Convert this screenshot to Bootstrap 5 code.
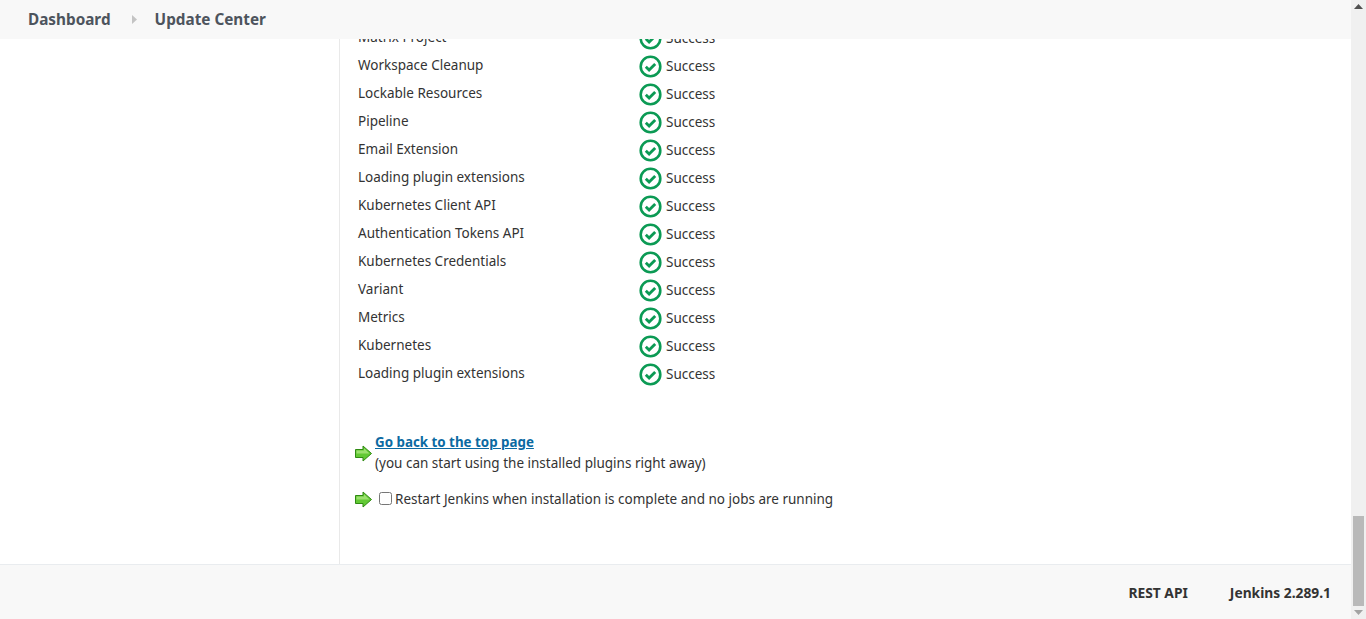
<!DOCTYPE html>
<html lang="en">
  <head>
    <meta charset="UTF-8" />
    <title>Update Center</title>
    <link href="https://cdn.jsdelivr.net/npm/bootstrap@5.3.3/dist/css/bootstrap.min.css" rel="stylesheet" />
    <style>
      html, body { height: 100%; overflow: hidden; }
      body { font-family: "Noto Sans", "Liberation Sans", sans-serif; font-size: 13.5px; color: #333; }
      .page-wrap { height: 619px; }
      .page-col { min-width: 0; }
      .top-bar { height: 39px; background: #f8f8f8; padding-left: 28px; color: #4d545d; font-size: 15.3px; font-weight: 700; z-index: 2; }
      .crumb-sep { width: 44px; padding-left: 21px; }
      .crumb-sep svg { display: block; }
      .main-area { min-height: 0; overflow: hidden; }
      .side-pane { width: 340px; border-right: 1px solid #e9e9e9; }
      .result-list { margin-top: -15px; padding-left: 18px; }
      .result-row { height: 28px; }
      .result-name { width: 281px; padding-bottom: 2px; }
      .status-ok { gap: 4px; }
      .next-block { margin-top: 44px; padding-left: 15px; line-height: 21px; }
      .back-text { margin-left: 3px; }
      .back-link { font-size: 13.35px; font-weight: 700; color: #0b6aa2; }
      .arrow-ico { width: 17px; height: 17px; flex: none; }
      .restart-row { margin-top: 15px; }
      .restart-row input { width: 13px; height: 13px; margin: 0 3px 2px 7px; }
      .foot-bar { height: 55px; background: #f8f8f8; border-top: 1px solid #e9ecef; padding: 2px 20px 0 0; gap: 42px; color: #333; font-size: 13.8px; font-weight: 700; }
      .fake-scroll { width: 15px; background: #f0f0f0; }
      .scroll-thumb { width: 11px; height: 90px; margin: 0 2px; background: #b9b9b9; }
      .scroll-cap { height: 13px; }
    </style>
  </head>
  <body>
    <div class="page-wrap d-flex">
      <div class="page-col flex-grow-1 d-flex flex-column">
        <div class="top-bar d-flex align-items-center flex-shrink-0">
          <span>Dashboard</span>
          <span class="crumb-sep"><svg width="5" height="9" viewBox="0 0 5 9"><path d="M0 0l5 4.500L0 9z" fill="#c4c4c4"/></svg></span>
          <span>Update Center</span>
        </div>
        <div class="main-area flex-grow-1 d-flex">
          <div class="side-pane flex-shrink-0"></div>
          <div class="flex-grow-1">
            <div class="result-list" id="results"></div>
            <div class="next-block">
              <div class="d-flex align-items-center">
                <svg class="arrow-ico" viewBox="0 0 17 17"><path d="M.5 4.500h7.500V1L16.500 8.500 8 16v-3.500H.5z" fill="#62c934" stroke="#2f8a12"/><path d="M1.500 5.500h7.500V3.200L14.500 8.500H1.500z" fill="#9be06f"/></svg>
                <div class="back-text">
                  <a href="#" class="back-link">Go back to the top page</a><br />
                  (you can start using the installed plugins right away)
                </div>
              </div>
              <div class="restart-row d-flex align-items-center">
                <svg class="arrow-ico" viewBox="0 0 17 17"><path d="M.5 4.500h7.500V1L16.500 8.500 8 16v-3.500H.5z" fill="#62c934" stroke="#2f8a12"/><path d="M1.500 5.500h7.500V3.200L14.500 8.500H1.500z" fill="#9be06f"/></svg>
                <input type="checkbox" id="restart" />
                <label for="restart">Restart Jenkins when installation is complete and no jobs are running</label>
              </div>
            </div>
          </div>
        </div>
        <div class="foot-bar d-flex align-items-center justify-content-end flex-shrink-0">
          <span>REST API</span>
          <span>Jenkins 2.289.1</span>
        </div>
      </div>
      <div class="fake-scroll d-flex flex-column flex-shrink-0">
        <div class="scroll-cap d-flex align-items-center justify-content-center">
          <svg width="9" height="5" viewBox="0 0 9 5"><path d="M0 5h9L4.500 0z" fill="#505050"/></svg>
        </div>
        <div class="flex-grow-1 d-flex flex-column justify-content-end">
          <div class="scroll-thumb"></div>
        </div>
        <div class="scroll-cap d-flex align-items-center justify-content-center">
          <svg width="9" height="5" viewBox="0 0 9 5"><path d="M0 0h9L4.500 5z" fill="#a3a3a3"/></svg>
        </div>
      </div>
    </div>

    <script>
      const plugins = ["Matrix Project", "Workspace Cleanup", "Lockable Resources", "Pipeline", "Email Extension", "Loading plugin extensions", "Kubernetes Client API", "Authentication Tokens API", "Kubernetes Credentials", "Variant", "Metrics", "Kubernetes", "Loading plugin extensions"];
      const okIcon = `<svg width="23" height="23" viewBox="0 0 23 23"><circle cx="11.500" cy="11.500" r="9.800" fill="#fff" stroke="#0b9a54" stroke-width="2.600"/><path d="M6.800 11.800l3.300 3.200 6.100-6" fill="none" stroke="#0b9a54" stroke-width="2.900"/></svg>`;
      document.getElementById("results").innerHTML = plugins.map((name) => {
        return `<div class="result-row d-flex align-items-center">
          <div class="result-name">${name}</div>
          <div class="status-ok d-flex align-items-center">${okIcon}<span>Success</span></div>
        </div>`;
      }).join("");
    </script>
    <script src="https://cdn.jsdelivr.net/npm/bootstrap@5.3.3/dist/js/bootstrap.bundle.min.js"></script>
  </body>
</html>
